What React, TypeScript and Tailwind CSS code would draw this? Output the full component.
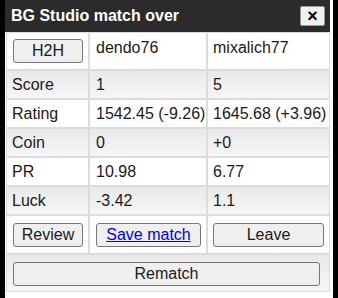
const rows = [
  { label: "Score", a: "1", b: "5", shade: true },
  { label: "Rating", a: "1542.45 (-9.26)", b: "1645.68 (+3.96)", shade: false },
  { label: "Coin", a: "0", b: "+0", shade: true },
  { label: "PR", a: "10.98", b: "6.77", shade: false },
  { label: "Luck", a: "-3.42", b: "1.1", shade: true },
];

const btn =
  "block h-[24px] w-full rounded-[3px] border border-[#767676] bg-[#efefef] text-[16px] leading-[22px] text-[#1a1a1a]";

const cell = "border border-[#dcdcdc] px-[5px] py-[4px] align-top leading-[19px] whitespace-nowrap";
const shaded = "bg-gradient-to-b from-[#e8e8e8] to-[#f7f7f7]";

export default function App() {
  return (
    <div
      className="flex h-[298px] w-[338px] bg-white text-[16px] text-[#1a1a1a]"
      style={{ fontFamily: '"Liberation Sans", Arial, sans-serif' }}
    >
      <div className="w-[5px] bg-black" />
      <div className="w-[325px]">
        <div className="flex h-[32px] items-center justify-between bg-[#2b2b2b] pl-[6px] pr-[5px]">
          <span className="text-[16px] font-bold text-white">BG Studio match over</span>
          <button className="flex h-[20px] w-[25px] items-center justify-center rounded-[2px] border border-[#999] bg-[#f0f0f0] text-[18px] font-bold leading-none text-black">
            ×
          </button>
        </div>
        <div className="pl-[1px]">
          <table className="w-[324px] table-fixed border-separate border-spacing-0">
            <colgroup>
              <col className="w-[83px]" />
              <col className="w-[118px]" />
              <col className="w-[123px]" />
            </colgroup>
            <tbody>
              <tr>
                <td className="border border-[#dcdcdc] pl-[6px] pr-[5px] pt-[6px] pb-[6px] align-top">
                  <button className={btn}>H2H</button>
                </td>
                <td className={`${cell} pt-[5px] pl-[6px]`}>dendo76</td>
                <td className={`${cell} pt-[5px]`}>mixalich77</td>
              </tr>
              {rows.map((r) => (
                <tr key={r.label} className={r.shade ? shaded : "bg-white"}>
                  <td className={`${cell} pl-[5px]`}>{r.label}</td>
                  <td className={`${cell} pl-[6px] pr-0`}>{r.a}</td>
                  <td className={`${cell} pr-0`}>{r.b}</td>
                </tr>
              ))}
              <tr>
                <td className="border border-[#dcdcdc] pl-[6px] pr-[5px] pt-[7px] pb-[6px]">
                  <button className={btn}>Review</button>
                </td>
                <td className="border border-[#dcdcdc] pl-[6px] pr-[5px] pt-[7px] pb-[6px]">
                  <button className={btn}>
                    <span className="text-[#0000ee] underline">Save match</span>
                  </button>
                </td>
                <td className="border border-[#dcdcdc] pl-[5px] pr-[5px] pt-[7px] pb-[6px]">
                  <button className={btn}>Leave</button>
                </td>
              </tr>
              <tr className={shaded}>
                <td colSpan={3} className="border border-[#dcdcdc] pl-[6px] pr-[9px] pt-[7px] pb-[5px]">
                  <button className={btn}>Rematch</button>
                </td>
              </tr>
            </tbody>
          </table>
        </div>
      </div>
      <div className="w-[3px] bg-white" />
      <div className="w-[5px] bg-black" />
    </div>
  );
}
